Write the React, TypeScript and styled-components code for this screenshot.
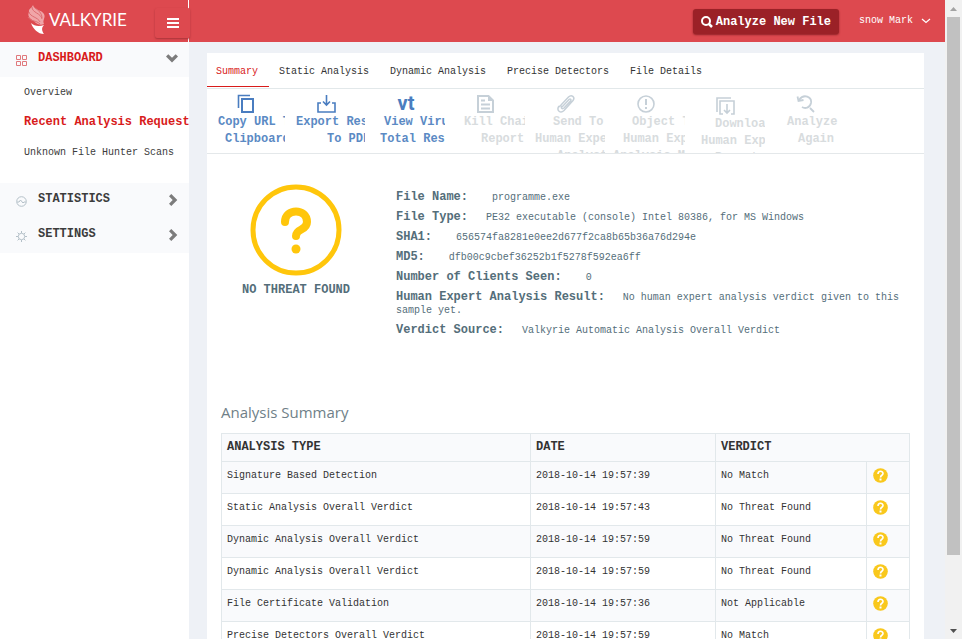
import React from "react";
import styled, { createGlobalStyle } from "styled-components";

const Global = createGlobalStyle`
  * { box-sizing: border-box; }
  body { margin: 0; background: #eef1f6; overflow: hidden; }
  body, button { font-family: "Liberation Mono", monospace; font-size: 10px; line-height: 13px; }
  ul, dl, dd, h2 { margin: 0; padding: 0; list-style: none; }
  a { color: inherit; text-decoration: none; }
`;

const Page = styled.div`
  display: flex;
  height: 100vh;
  overflow: hidden;
`;
const Shell = styled.div`
  flex: 1;
  min-width: 0;
  display: flex;
  flex-direction: column;
`;
const Header = styled.header`
  display: flex;
  flex: none;
  height: 42px;
  background: #dd494f;
  color: #fff;
`;
const Brand = styled.div`
  width: 189px;
  flex: none;
  display: flex;
  align-items: flex-start;
  justify-content: space-between;
  padding-left: 27px;
  border-right: 1px solid #fff;
`;
const Logo = styled.a`
  display: flex;
  gap: 3px;
  font: 400 17px/40px Lato, sans-serif;
  svg { display: block; }
`;
const MenuButton = styled.button`
  width: 35px;
  height: 30px;
  margin: 8px -2px 0 0;
  padding: 0;
  display: flex;
  align-items: center;
  justify-content: center;
  border: 0;
  border-radius: 2px;
  background: #dd494f;
  color: #fff;
  box-shadow: 0 1px 2px #a8343a;
`;
const Account = styled.div`
  flex: 1;
  display: flex;
  justify-content: flex-end;
  align-items: flex-start;
  gap: 20px;
  padding: 9px 14px 0 0;
`;
const Analyze = styled.button`
  display: flex;
  align-items: center;
  gap: 3px;
  height: 25px;
  padding: 1px 8px 0;
  border: 0;
  border-radius: 3px;
  background: #9b2127;
  color: #fff;
  font-size: 12px;
  font-weight: bold;
  box-shadow: 0 1px 2px #8f2026;
`;
const User = styled.button`
  display: flex;
  align-items: center;
  gap: 8px;
  margin: 0;
  padding: 5px 0;
  border: 0;
  background: none;
  color: #fff;
`;
const Body = styled.div`
  flex: 1;
  min-height: 0;
  display: flex;
`;
const Sidebar = styled.nav`
  width: 189px;
  flex: none;
  background: #fff;
  overflow: hidden;
`;
const Section = styled.button<{ $active?: boolean }>`
  width: 100%;
  height: 35px;
  display: flex;
  align-items: center;
  padding: 0 11px 2px 16px;
  border: 0;
  background: #f9fafc;
  color: ${(p) => (p.$active ? "#d81b1b" : "#3c3c3c")};
  font-size: 12px;
  font-weight: bold;
  text-align: left;
  svg:first-child { margin: 3px 11px 0 0; flex: none; color: ${(p) => (p.$active ? "#e0787c" : "#b4c0c8")}; }
  svg:last-child { margin-left: auto; color: #7c7c7c; }
`;
const SubMenu = styled.ul`
  padding: 6px 0 10px;
`;
const SubItem = styled.li<{ $active?: boolean }>`
  height: 30px;
  padding: 3px 0 0 24px;
  white-space: nowrap;
  color: ${(p) => (p.$active ? "#d81b1b" : "#3c3c3c")};
  font-size: ${(p) => (p.$active ? "12px" : "10px")};
  font-weight: ${(p) => (p.$active ? "bold" : "normal")};
`;
const Main = styled.main`
  flex: 1;
  min-width: 0;
  padding: 11px 21px 0 18px;
  overflow: hidden;
`;
const Panel = styled.div`
  background: #fff;
  min-height: 100%;
`;
const Tabs = styled.div`
  display: flex;
  gap: 1px;
  height: 36px;
  border-bottom: 1px solid #e2e8ea;
`;
const Tab = styled.button<{ $active?: boolean }>`
  height: 34px;
  padding: 3px 11px 0 9px;
  border: 0;
  border-bottom: 1px solid ${(p) => (p.$active ? "#d81b1b" : "transparent")};
  background: none;
  color: ${(p) => (p.$active ? "#d81b1b" : "#333")};
`;
const Toolbar = styled.div`
  display: flex;
  height: 65px;
  overflow: hidden;
  border-bottom: 1px solid #e4e8ea;
`;
const Tool = styled.button<{ $low?: boolean }>`
  flex: 0 0 80px;
  width: 80px;
  margin: 0 0 -20px;
  padding: ${(p) => (p.$low ? 7 : 5)}px 0 0;
  display: flex;
  flex-direction: column;
  align-items: stretch;
  overflow: hidden;
  border: 0;
  border-right: 2px solid transparent;
  background: none;
  color: #5b8ac4;
  font-size: 12px;
  font-weight: bold;
  text-align: left;
  &:disabled { color: #d8dcde; }
  svg { display: block; flex: none; margin: 0 auto; color: #4a7dc0; }
  &:disabled svg { color: #c6d0d8; }
`;
const VtMark = styled.span`
  height: 20px;
  color: #4a7dc0;
  font: 700 20px/18px Roboto, sans-serif;
  text-align: center;
`;
const ToolLine = styled.span<{ $indent: number }>`
  padding-left: ${(p) => p.$indent}px;
  line-height: 17px;
  white-space: nowrap;
`;
const Overview = styled.section`
  display: flex;
  gap: 11px;
  min-height: 248px;
  padding: 30px 14px 0 0;
`;
const Verdict = styled.div`
  width: 178px;
  flex: none;
  display: flex;
  flex-direction: column;
  align-items: center;
  gap: 8px;
  color: #546e7a;
  font-size: 12px;
  font-weight: bold;
  white-space: nowrap;
`;
const Facts = styled.dl`
  flex: 1;
  padding-top: 7px;
  color: #546e7a;
`;
const Fact = styled.div`
  margin-bottom: 7px;
  dt { display: inline; font-size: 12px; font-weight: bold; line-height: 13px; }
`;
const FactValue = styled.dd<{ $gap: number }>`
  display: inline;
  margin-left: ${(p) => p.$gap}px;
`;
const Summary = styled.section`
  padding: 0 14px;
`;
const Title = styled.h2`
  padding-bottom: 11px;
  font: 400 15px/20px "Open Sans", sans-serif;
  color: #6f7f88;
`;
const Table = styled.table`
  width: 100%;
  table-layout: fixed;
  border-collapse: collapse;
  color: #333;
  th, td { border: 1px solid #e2e8eb; text-align: left; padding: 0 5px 4px; }
  th { height: 28px; padding-bottom: 0; font-size: 12px; background: #f9fafc; }
  td { height: 32px; }
  tbody tr:nth-child(odd) { background: #f9fafc; }
  svg { display: block; margin-left: 1px; }
`;
const Scrollbar = styled.div`
  width: 17px;
  flex: none;
  display: flex;
  flex-direction: column;
  align-items: center;
  background: #f1f1f1;
  svg { display: block; flex: none; }
`;
const Thumb = styled.div`
  width: 13px;
  height: 538px;
  margin-bottom: auto;
  background: #c1c1c1;
`;

const Wing = () => (
  <svg width="19" height="38" fill="none">
    <path d="M6 5c1 5 9 5 11 9c2 4-2 6 0 10c-3 2-8 0-10-3c-4-2-7-5-5-9c-1-3 3-4 4-7Z" fill="#f0a5a8" />
    <path d="M5 7c0 6 9 6 10 12M2 12c1 5 9 5 11 10M1 17c3 5 8 3 12 7M8 8c3 2 7 5 7 10" stroke="#dd6c71" />
    <path d="M4 23c3 3 8 4 13 2c-3 3-2 6 0 9c-6 0-11-5-13-11Z" fill="#fff" />
  </svg>
);
const Bars = () => (
  <svg width="12" height="10" fill="#fff"><path d="M0 0h12v2H0zM0 4h12v2H0zM0 8h12v2H0z" /></svg>
);
const Search = () => (
  <svg width="12" height="12" fill="none" stroke="#fff" strokeWidth="2"><circle cx="5" cy="5" r="4" /><path d="M8 8l3 3" strokeWidth="2.5" /></svg>
);
const Caret = () => (
  <svg width="10" height="6" fill="none" stroke="#fff" strokeWidth="1.2"><path d="M1 1l4 3.500 4-3.500" /></svg>
);
const ChevronDown = () => (
  <svg width="12" height="9" fill="currentColor"><path d="M0 2.500L2.300.3 6 3.800 9.700.3 12 2.500 6 8.500z" /></svg>
);
const ChevronRight = () => (
  <svg width="10" height="12" fill="currentColor"><path d="M3.300 0L9.300 6l-6 6L1 9.700 4.700 6 1 2.300z" /></svg>
);
const GridIcon = () => (
  <svg width="11" height="11" fill="none" stroke="currentColor"><path d="M.5.5h4v4h-4zM6.500.5h4v4h-4zM.5 6.500h4v4h-4zM6.500 6.500h4v4h-4z" /></svg>
);
const StatsIcon = () => (
  <svg width="11" height="11" fill="none" stroke="currentColor"><circle cx="5.500" cy="5.500" r="4.800" /><path d="M1 6h2l1.500-2L7 7l1-1h2" /></svg>
);
const GearIcon = () => (
  <svg width="11" height="11" fill="none" stroke="currentColor"><circle cx="5.500" cy="5.500" r="3.200" /><path d="M5.500 0v2M5.500 9v2M0 5.500h2M9 5.500h2M1.600 1.600L3 3M8 8l1.400 1.400M1.600 9.400L3 8M8 3l1.400-1.400" /></svg>
);

const toolSvg = { width: 20, height: 20, viewBox: "0 0 20 20", fill: "none", stroke: "currentColor", strokeWidth: 2 };
const CopyIcon = () => (
  <svg {...toolSvg}><path d="M2.500 14V1.500H14" strokeWidth="1.600" /><path d="M6 5h11v13H6z" /></svg>
);
const ExportIcon = () => (
  <svg {...toolSvg}><path d="M5 9H2v9h17V9h-3" strokeWidth="1.600" /><path d="M10.500 1v10M7 7.500l3.500 3.500L14 7.500" strokeWidth="1.600" /></svg>
);
const VtIcon = () => <VtMark>vt</VtMark>;
const ReportIcon = () => (
  <svg {...toolSvg}><path d="M2 2h10.500L17 6.500V18H2z" /><path d="M12 1v6h6z" fill="currentColor" stroke="none" /><path d="M5 6.500h4M5 10.500h9M5 14.500h9" /></svg>
);
const ClipIcon = () => (
  <svg {...toolSvg} strokeWidth={1.5}><path d="M5 11l7.500-8c3-3 7 0 4.500 3.500L8 16.500c-3.500 3.500-8 0-5-4.500M5 11l-2 2M6 13l7-7.500c1.500-1 2.500 0 1.500 1.500L8 14c-2 1.500-3.500 0-2-2" /></svg>
);
const AlertIcon = () => (
  <svg {...toolSvg} strokeWidth={1.6}><circle cx="10" cy="10" r="8" /><path d="M10 5v6M10 13v2" strokeWidth="2" /></svg>
);
const DownloadIcon = () => (
  <svg {...toolSvg} strokeWidth={1.6}><path d="M1 16V2h14" /><path d="M7 18H4V5h14v13h-3M11 8v9M8 14l3 3 3-3" /></svg>
);
const AgainIcon = () => (
  <svg {...toolSvg} strokeWidth={1.8}><path d="M3 6c5-7 13-3 12 3c-1 5-6 6-9 4" /><path d="M14 14l4 4M1.500 2.500L2.500 7l5-1" /></svg>
);
const ThreatIcon = () => (
  <svg width="92" height="92" fill="none" stroke="#ffc60b">
    <circle cx="46" cy="46" r="43" strokeWidth="5" />
    <path d="M35 38c0-14 22-14 22 0c0 9-11 6-11 14" strokeWidth="8" strokeLinecap="round" />
    <circle cx="46" cy="65" r="4.500" fill="#ffc60b" stroke="none" />
  </svg>
);
const QuestionIcon = () => (
  <svg width="15" height="15" role="img" aria-label="Unknown">
    <circle cx="7.500" cy="7.500" r="7.300" fill="#f9c81c" />
    <path d="M5 6c0-3.500 5-3.500 5-.5C10 7.500 7.500 7 7.500 9.500" fill="none" stroke="#fff" strokeWidth="1.600" />
    <path d="M6.500 10.500h2v2h-2z" fill="#fff" />
  </svg>
);

type ToolDef = { icon: () => React.JSX.Element; lines: [string, number][]; disabled?: boolean; low?: boolean };
const tools: ToolDef[] = [
  { icon: CopyIcon, lines: [["Copy URL To", 11], ["Clipboard", 18]] },
  { icon: ExportIcon, lines: [["Export Result", 9], ["To PDF", 40]] },
  { icon: VtIcon, lines: [["View Virus", 17], ["Total Result", 13]] },
  { icon: ReportIcon, lines: [["Kill Chain", 17], ["Report", 34]], disabled: true },
  { icon: ClipIcon, lines: [["Send To", 26], ["Human Expert", 8], ["Analyst", 30]], disabled: true },
  { icon: AlertIcon, lines: [["Object To", 25], ["Human Expert", 16], ["Analysis Manual", 6]], disabled: true },
  { icon: DownloadIcon, lines: [["Download", 28], ["Human Expert", 14], ["Report", 28]], disabled: true, low: true },
  { icon: AgainIcon, lines: [["Analyze", 20], ["Again", 31]], disabled: true },
];

const facts: [string, string, number][] = [
  ["File Name:", "programme.exe", 24],
  ["File Type:", "PE32 executable (console) Intel 80386, for MS Windows", 18],
  ["SHA1:", "656574fa8281e0ee2d677f2ca8b65b36a76d294e", 24],
  ["MD5:", "dfb00c9cbef36252b1f5278f592ea6ff", 24],
  ["Number of Clients Seen:", "0", 24],
  ["Human Expert Analysis Result:", "No human expert analysis verdict given to this sample yet.", 18],
  ["Verdict Source:", "Valkyrie Automatic Analysis Overall Verdict", 18],
];

const rows = [
  ["Signature Based Detection", "2018-10-14 19:57:39", "No Match"],
  ["Static Analysis Overall Verdict", "2018-10-14 19:57:43", "No Threat Found"],
  ["Dynamic Analysis Overall Verdict", "2018-10-14 19:57:59", "No Threat Found"],
  ["Dynamic Analysis Overall Verdict", "2018-10-14 19:57:59", "No Threat Found"],
  ["File Certificate Validation", "2018-10-14 19:57:36", "Not Applicable"],
  ["Precise Detectors Overall Verdict", "2018-10-14 19:57:59", "No Match"],
];

const tabs = ["Summary", "Static Analysis", "Dynamic Analysis", "Precise Detectors", "File Details"];

export default function App() {
  return (
    <Page>
      <Global />
      <Shell>
        <Header>
          <Brand>
            <Logo href="#home"><Wing />VALKYRIE</Logo>
            <MenuButton aria-label="Toggle menu"><Bars /></MenuButton>
          </Brand>
          <Account>
            <Analyze><Search />Analyze New File</Analyze>
            <User>snow Mark<Caret /></User>
          </Account>
        </Header>
        <Body>
          <Sidebar>
            <Section $active><GridIcon />DASHBOARD<ChevronDown /></Section>
            <SubMenu>
              <SubItem><a href="#overview">Overview</a></SubItem>
              <SubItem $active><a href="#recent">Recent Analysis Requests</a></SubItem>
              <SubItem><a href="#scans">Unknown File Hunter Scans</a></SubItem>
            </SubMenu>
            <Section><StatsIcon />STATISTICS<ChevronRight /></Section>
            <Section><GearIcon />SETTINGS<ChevronRight /></Section>
          </Sidebar>
          <Main>
            <Panel>
              <Tabs role="tablist">
                {tabs.map((t, i) => (
                  <Tab key={t} role="tab" aria-selected={i === 0} $active={i === 0}>{t}</Tab>
                ))}
              </Tabs>
              <Toolbar>
                {tools.map(({ icon: Icon, lines, disabled, low }, i) => (
                  <Tool key={i} disabled={disabled} $low={low}>
                    <Icon />
                    {lines.map(([text, indent]) => (
                      <ToolLine key={text} $indent={indent}>{text}</ToolLine>
                    ))}
                  </Tool>
                ))}
              </Toolbar>
              <Overview>
                <Verdict><ThreatIcon />NO THREAT FOUND</Verdict>
                <Facts>
                  {facts.map(([label, value, gap]) => (
                    <Fact key={label}>
                      <dt>{label}</dt>
                      <FactValue $gap={gap}>{value}</FactValue>
                    </Fact>
                  ))}
                </Facts>
              </Overview>
              <Summary>
                <Title>Analysis Summary</Title>
                <Table>
                  <colgroup>
                    <col />
                    <col width="185" />
                    <col width="151" />
                    <col width="43" />
                  </colgroup>
                  <thead>
                    <tr><th>ANALYSIS TYPE</th><th>DATE</th><th colSpan={2}>VERDICT</th></tr>
                  </thead>
                  <tbody>
                    {rows.map(([type, date, verdict], i) => (
                      <tr key={i}>
                        <td>{type}</td>
                        <td>{date}</td>
                        <td>{verdict}</td>
                        <td><QuestionIcon /></td>
                      </tr>
                    ))}
                  </tbody>
                </Table>
              </Summary>
            </Panel>
          </Main>
        </Body>
      </Shell>
      <Scrollbar aria-hidden="true">
        <svg width="17" height="17" fill="#a3a3a3"><path d="M5 11l3.500-4 3.500 4z" /></svg>
        <Thumb />
        <svg width="17" height="17" fill="#505050"><path d="M5 7l3.500 4L12 7z" /></svg>
      </Scrollbar>
    </Page>
  );
}
